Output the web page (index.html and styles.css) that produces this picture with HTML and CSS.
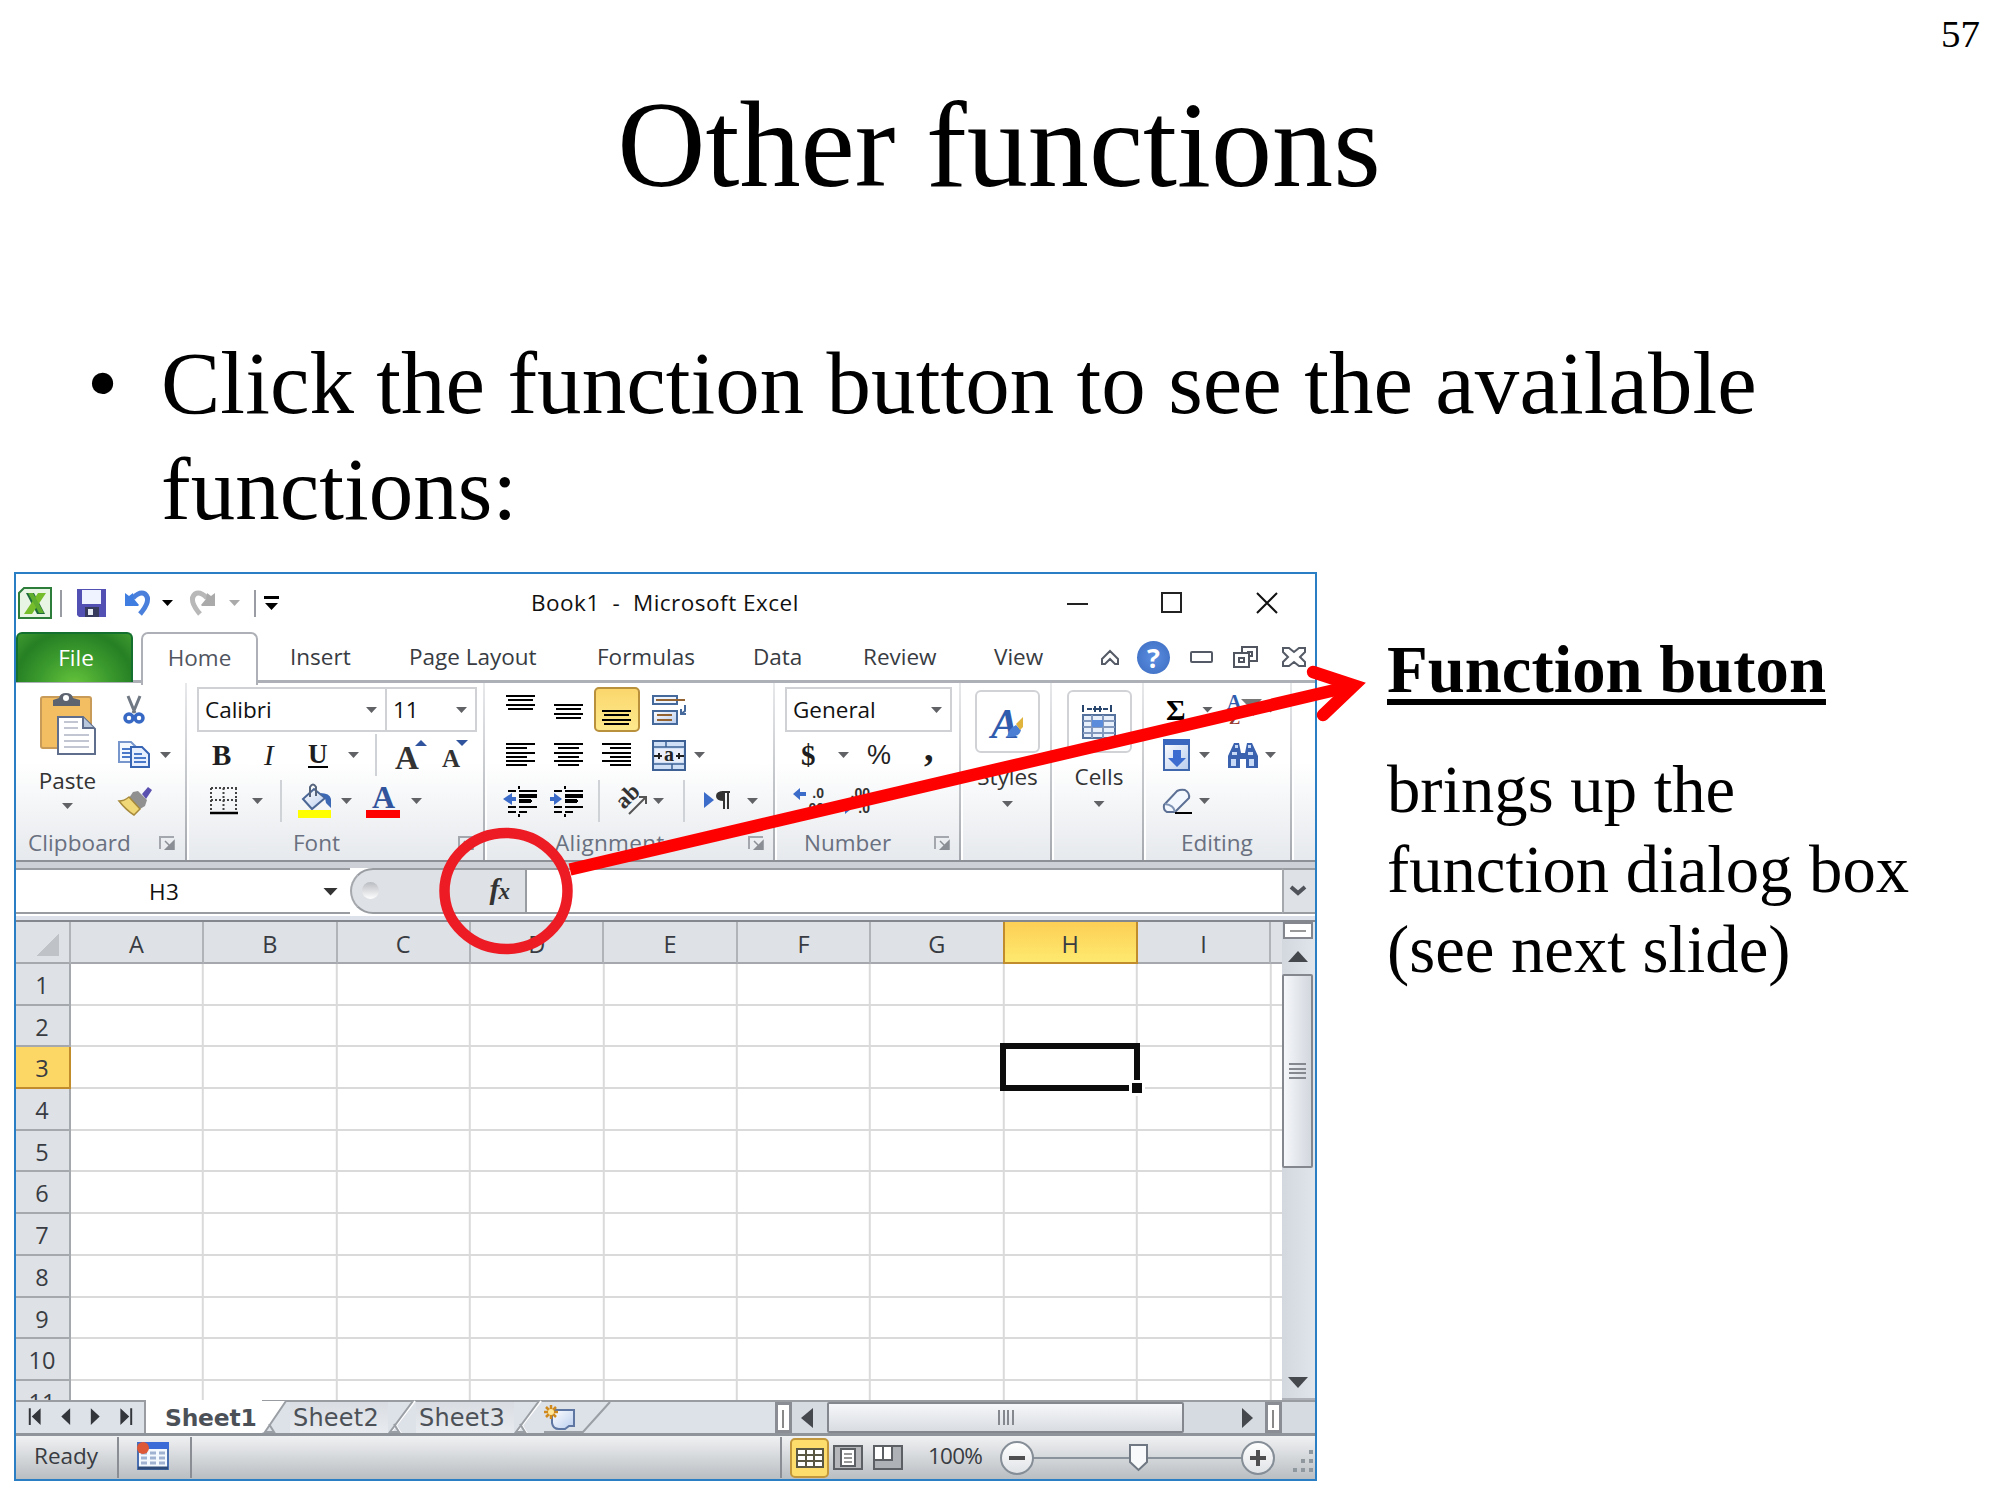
FILE: index.html
```html
<!DOCTYPE html>
<html lang="en">
<head>
<meta charset="utf-8">
<title>Other functions</title>
<link rel="stylesheet" href="styles.css">
</head>
<body>
<svg class="sprite" aria-hidden="true">
  <defs>
    <linearGradient id="paper" x1="0" y1="0" x2="1" y2="1"><stop offset="0" stop-color="#fff"/><stop offset="1" stop-color="#b9cdee"/></linearGradient>
    <linearGradient id="knob" x1="0" y1="0" x2="0" y2="1"><stop offset="0" stop-color="#fff"/><stop offset="1" stop-color="#dfe2e6"/></linearGradient>
    <symbol id="launcher" viewBox="0 0 16 14"><path d="M1 13V1h14" fill="none" stroke="#a4a8ae" stroke-width="2"/><path d="M6 5l4 4M15 5v9H6z" fill="#8b8f95" stroke="#8b8f95" stroke-width="1.5"/></symbol>
  </defs>
</svg>
<main class="slide">
  <div class="page-number">57</div>
  <h1 class="title">Other functions</h1>
  <ul class="bullets"><li>Click the function button to see the available functions:</li></ul>

  <div class="content">
    <section class="window">
      <header class="titlebar">
        <svg width="34" height="32" viewBox="0 0 34 32"><path d="M6 1h27v30H1V6z" fill="#e8f4e4" stroke="#2d7d3a" stroke-width="2"/><path d="M8 6h8l11 21h-8z" fill="#1d6a3c"/><path d="M20 6h8L14 27H6z" fill="#76bd2c"/><path d="M10 6h5l11 20h-5z" fill="#5fae2f"/></svg>
        <i class="tick"></i>
        <svg width="29" height="28" viewBox="0 0 29 28"><path d="M0 0h29v28H2l-2-2z" fill="#5350b4"/><path d="M5 1h19v14H5z" fill="#eef3ff"/><path d="M8 18h14v10H8z" fill="#363a5c"/><path d="M11 20h5v6h-5z" fill="#e8ecf4"/></svg>
        <svg width="26" height="26" viewBox="0 0 26 26"><path d="M8 8Q15 1 20 4q7 6-5 20" fill="none" stroke="#4a80dc" stroke-width="5"/><path d="M0 3l4 3 4-3 1 6 5 6-1 1H0z" fill="#3f7ee0"/></svg>
        <b class="caret caret-black"></b>
        <svg width="26" height="26" viewBox="0 0 26 26"><path d="M18 8Q11 1 6 4q-7 6 5 20" fill="none" stroke="#b8b8b8" stroke-width="5"/><path d="M26 3l-4 3-4-3-1 6-5 6 1 1h13z" fill="#aaa"/></svg>
        <b class="caret caret-light"></b>
        <i class="tick"></i>
        <svg width="15" height="15" viewBox="0 0 15 15"><path d="M0 0h15v3H0zM1 7h13l-6.500 7z"/></svg>
        <span class="caption">Book1 &nbsp;- &nbsp;Microsoft Excel</span>
        <svg width="22" height="22" viewBox="0 0 22 22"><path d="M0 12h21" stroke="#222" stroke-width="2"/></svg>
        <svg width="22" height="22" viewBox="0 0 22 22"><path d="M1 1h19v19H1z" fill="none" stroke="#222" stroke-width="2"/></svg>
        <svg width="22" height="22" viewBox="0 0 22 22"><path d="M1 1l20 20M21 1L1 21" stroke="#111" stroke-width="2"/></svg>
      </header>

      <nav class="tabs">
        <span class="tab-file">File</span>
        <span class="tab-home">Home</span>
        <span class="tab-insert">Insert</span><span>Page Layout</span><span>Formulas</span><span>Data</span><span>Review</span><span>View</span>
        <svg width="20" height="17" viewBox="0 0 20 17"><path d="M10 2l8 8v5h-3l-5-5-5 5H2v-5z" fill="#fff" stroke="#555b66" stroke-width="2"/></svg>
        <span class="help">?</span>
        <svg width="24" height="13" viewBox="0 0 24 13"><rect x="1" y="1" width="21" height="10" rx="1" fill="none" stroke="#555b66" stroke-width="2"/></svg>
        <svg width="26" height="24" viewBox="0 0 26 24"><path d="M9 8V2h15v14h-7M14 7h5v4h-2M1 8h15v14H1zM6 13h5v4H6z" fill="none" stroke="#50555f" stroke-width="2"/></svg>
        <svg width="24" height="20" viewBox="0 0 24 20"><path d="M1 1h6l5 4 5-4h6v4l-5 5 5 5v4h-6l-5-4-5 4H1v-4l5-5-5-5z" fill="#fff" stroke="#555b66" stroke-width="2"/></svg>
      </nav>

      <div class="ribbon">
        <section class="group clipboard">
          <div class="clip-body">
            <div class="paste">
              <svg width="58" height="65" viewBox="0 0 58 65"><rect x="1" y="5" width="50" height="51" rx="2" fill="#f3be62" stroke="#c89b58" stroke-width="2"/><path d="M13 14V8l6-2q1-5 7-5t7 5l7 2v6z" fill="#5d6470"/><circle cx="26" cy="6" r="3" fill="#fff"/><path d="M18 25h25l12 12v25H18z" fill="#fff" stroke="#5e6e8c" stroke-width="2"/><path d="M43 25v11h11" fill="#b9c8dc" stroke="#5e6e8c" stroke-width="2"/><path d="M24 30h14M24 36h14M24 43h25M24 49h25M24 55h25" stroke="#c2c6d2" stroke-width="2"/></svg>
              <span>Paste</span><b class="caret"></b>
            </div>
            <div class="clip-tools">
              <div class="cell cut"><svg width="20" height="30" viewBox="0 0 20 30"><path d="M4 1l7 17M16 1L9 18" stroke="#6f7883" stroke-width="3"/><circle cx="5" cy="23" r="4" fill="none" stroke="#3668c4" stroke-width="3.500"/><circle cx="15" cy="23" r="4" fill="none" stroke="#3668c4" stroke-width="3.500"/></svg></div>
              <div class="cell"><svg width="32" height="28" viewBox="0 0 32 28"><path d="M1 1h12l5 5v15H1z" fill="#f4f8ff" stroke="#7796cc" stroke-width="2"/><path d="M4 8h8M4 12h8M4 16h8" stroke="#4b79c9" stroke-width="2"/><path d="M13 6h11l7 7v13H13z" fill="#e8f0ff" stroke="#3864b4" stroke-width="2"/><path d="M16 13h8M16 17h12M16 21h12" stroke="#4b79c9" stroke-width="2"/></svg><b class="caret"></b></div>
              <div class="cell"><svg width="34" height="30" viewBox="0 0 34 30"><path d="M24 8l6-7 4 3-6 9z" fill="#5a50b0"/><path d="M15 6l5-1 9 9-2 6-5 3L11 12z" fill="#909090"/><path d="M11 11l11 12-6 6Q8 24 1 15q5 0 10-4z" fill="#f0d778" stroke="#a78a3b" stroke-width="1.500"/></svg></div>
            </div>
          </div>
          <footer><span>Clipboard</span><svg class="launch"><use href="#launcher"/></svg></footer>
        </section>

        <section class="group font">
          <div class="row combos"><span class="combo">Calibri<b class="caret"></b></span><span class="combo">11<b class="caret"></b></span></div>
          <div class="row font-style">
            <b class="serif">B</b><i class="serif italic">I</i><b class="serif under">U</b><b class="caret"></b><i class="sep"></i>
            <span class="grow">A<svg width="12" height="6" viewBox="0 0 12 6"><path d="M0 6l6-6 6 6z" fill="#2f539c"/></svg></span>
            <span class="grow shrink">A<svg width="12" height="6" viewBox="0 0 12 6"><path d="M0 0h12L6 6z" fill="#2f539c"/></svg></span>
          </div>
          <div class="row font-color">
            <svg width="28" height="28" viewBox="0 0 28 28"><path d="M1 1h26M1 13h26M1 1v22M13.500 1v22M26 1v22" stroke="#444" stroke-width="2" stroke-dasharray="2 2"/><path d="M0 26h28" stroke="#000" stroke-width="2.500"/></svg><b class="caret"></b><i class="sep"></i>
            <svg width="34" height="34" viewBox="0 0 34 34"><path d="M5 15L16 5l11 9-13 11z" fill="url(#paper)" stroke="#4b6796" stroke-width="2"/><path d="M12 13V3q3-5 6 0v9" fill="none" stroke="#57657c" stroke-width="2"/><path d="M22 9q10 0 11 6v9l-5-5-1-5z" fill="#3c68b4"/><path d="M0 26h33v8H0z" fill="#ff0"/></svg><b class="caret"></b>
            <svg width="34" height="34" viewBox="0 0 34 34"><path d="M0 26h34v8H0z" fill="red"/><text x="6" y="24" class="glyph-a">A</text></svg><b class="caret"></b>
          </div>
          <footer><span>Font</span><svg class="launch"><use href="#launcher"/></svg></footer>
        </section>

        <section class="group alignment">
          <div class="row align-v">
            <svg width="30" height="30" viewBox="0 0 30 30"><path d="M0 1h29M2 5h25M0 10h29M2 14h25" stroke="#000" stroke-width="2"/></svg>
            <svg width="30" height="30" viewBox="0 0 30 30"><path d="M0 10h29M2 14h25M0 19h29M2 23h25" stroke="#000" stroke-width="2"/></svg>
            <span class="pressed"><svg width="30" height="30" viewBox="0 0 30 30"><path d="M0 16h29M2 20h25M0 25h29M2 29h25" stroke="#000" stroke-width="2"/></svg></span>
            <svg width="36" height="32" viewBox="0 0 36 32"><path d="M1 2h24v8H1z" fill="#eef5ff" stroke="#46699b" stroke-width="2"/><path d="M4 6h29" stroke="#946332" stroke-width="2"/><path d="M1 17h24v13H1z" fill="url(#paper)" stroke="#46699b" stroke-width="2"/><path d="M5 21h15M5 26h15" stroke="#946332" stroke-width="2"/><path d="M33 11v6l-4 3M29 15v5h5" fill="none" stroke="#46699b" stroke-width="2"/></svg>
          </div>
          <div class="row align-h">
            <svg width="30" height="24" viewBox="0 0 30 24"><path d="M0 1h29M0 5h21M0 10h29M0 14h21M0 18h29M0 22h21" stroke="#000" stroke-width="2"/></svg>
            <svg width="30" height="24" viewBox="0 0 30 24"><path d="M0 1h29M4 5h21M0 10h29M4 14h21M0 18h29M4 22h21" stroke="#000" stroke-width="2"/></svg>
            <svg width="30" height="24" viewBox="0 0 30 24"><path d="M0 1h29M8 5h21M0 10h29M8 14h21M0 18h29M8 22h21" stroke="#000" stroke-width="2"/></svg>
            <svg width="34" height="31" viewBox="0 0 34 31"><path d="M1 1h32v29H1z" fill="#cfdff5" stroke="#3d6195" stroke-width="2"/><path d="M1 7h32M1 24h32M14 1v6M20 24v6" stroke="#3d6195" stroke-width="1.500"/><path d="M3 9h28v13H3z" fill="#e9eef8"/><path d="M2 16h8M7 13v6M32 16h-8M27 13v6" stroke="#222" stroke-width="2"/><text x="12" y="21" class="glyph-merge">a</text></svg><b class="caret"></b>
          </div>
          <div class="row indent">
            <svg width="34" height="32" viewBox="0 0 34 32"><path d="M5 6h8M16 6h18M16 16h13M5 22h8M16 22h18M5 27h8M16 27h8M16 1v3M16 29v3" stroke="#000" stroke-width="2"/><path d="M16 11h18M16 16h12" stroke="#000" stroke-width="4"/><path d="M0 14l9-6v4h4v4H9v4z" fill="#3c6cca"/></svg>
            <svg width="34" height="32" viewBox="0 0 34 32"><path d="M5 6h8M16 6h18M16 16h13M5 22h8M16 22h18M5 27h8M16 27h8M16 1v3M16 29v3" stroke="#000" stroke-width="2"/><path d="M16 11h18M16 16h12" stroke="#000" stroke-width="4"/><path d="M13 14L5 8v4H1v4h4v4z" fill="#3c6cca"/></svg>
            <i class="sep"></i>
            <svg width="34" height="30" viewBox="0 0 34 30"><text x="0" y="0" transform="translate(8 24) rotate(-45)" class="glyph-ab">ab</text><path d="M13 28L30 11M30 18v-7h-7" stroke="#555" stroke-width="2" fill="none"/></svg><b class="caret"></b>
            <i class="sep"></i>
            <svg width="28" height="20" viewBox="0 0 28 20"><path d="M0 1l10 8-10 8z" fill="#3c6cca"/><path d="M18 1h8M20 1v17M24 1v17" stroke="#333" stroke-width="2"/><path d="M20 0q-8 0-8 5t8 5z" fill="#333"/></svg><b class="caret"></b>
          </div>
          <footer><span>Alignment</span><svg class="launch"><use href="#launcher"/></svg></footer>
        </section>

        <section class="group number">
          <div class="row"><span class="combo">General<b class="caret"></b></span></div>
          <div class="row formats"><b class="serif">$</b><b class="caret"></b><span class="percent">%</span><b class="serif comma">,</b></div>
          <div class="row decimals">
            <svg width="33" height="30" viewBox="0 0 33 30"><path d="M0 8l7-6v4h6v4H7v4z" fill="#3c6cca"/><text x="31" y="12" class="glyph-num">.0</text><text x="31" y="27" class="glyph-num">.00</text></svg>
            <svg width="33" height="30" viewBox="0 0 33 30"><text x="28" y="12" class="glyph-num">.00</text><path d="M9 23l-6-5v3H0v4h3v3z" fill="#3c6cca"/><text x="28" y="27" class="glyph-num">.0</text></svg>
          </div>
          <footer><span>Number</span><svg class="launch"><use href="#launcher"/></svg></footer>
        </section>

        <section class="group big">
          <span class="big-button"><svg width="34" height="36" viewBox="0 0 34 36"><text x="0" y="34" class="glyph-style">A</text><path d="M16 33q2-9 9-12l5 5q-2 8-14 7z" fill="#4a7fd4"/><path d="M25 20l7-7v10l-3 3z" fill="#e0b43c"/></svg></span>
          <span>Styles</span><b class="caret"></b>
        </section>
        <section class="group big">
          <span class="big-button"><svg width="34" height="36" viewBox="0 0 34 36"><path d="M1 1v7M29 1v7M5 5h5M13 2v6M11 5h9M18 2v6M21 5h5" stroke="#29466f" stroke-width="2"/><path d="M1 11h32v23H1z" fill="#e8f0fb" stroke="#54719e" stroke-width="2"/><path d="M1 17h32M1 23h32M1 29h32M10 11v23M21 11v23" stroke="#8299bd" stroke-width="2"/><path d="M10 16h11v7H10z" fill="#5b8cdb"/></svg></span>
          <span>Cells</span><b class="caret"></b>
        </section>

        <section class="group editing">
          <div class="row edit-a">
            <b class="sigma">Σ</b><b class="caret"></b>
            <svg width="36" height="32" viewBox="0 0 36 32"><text x="0" y="15" class="glyph-sort">A</text><text x="2" y="30" class="glyph-z">Z</text><path d="M14 5h21l-8 9v8l-4-3v-5z" fill="#777"/></svg><b class="caret"></b>
          </div>
          <div class="row edit-b">
            <svg width="27" height="32" viewBox="0 0 27 32"><path d="M1 1h25v30H1z" fill="url(#paper)" stroke="#3f67ad" stroke-width="2"/><path d="M0 0h27v6H0z" fill="#3967c0"/><path d="M10 11h8v8h5l-9 9-9-9h5z" fill="#3c6cd0"/></svg><b class="caret"></b>
            <svg width="32" height="28" viewBox="0 0 32 28"><path d="M7 2h5l2 10h4l2-10h5l6 13v12H19v-9h-6v9H1V15z" fill="#3a62ae"/><path d="M8 4h3v3H8zM21 4h3v3h-3zM5 11h5v3H5zM21 11h5v3h-5zM4 18h5v7H4zM22 18h5v7h-5z" fill="#c8daf6"/></svg><b class="caret"></b>
          </div>
          <div class="row edit-b">
            <svg width="29" height="26" viewBox="0 0 29 26"><path d="M1 17L14 3q4-2 8-1 5 3 4 8L12 24H4q-4-2-3-7z" fill="#f3f7fe" stroke="#5b7094" stroke-width="2"/><path d="M2 16q9 1 10 8" fill="none" stroke="#7f94b5" stroke-width="2"/><path d="M12 25h17" stroke="#000" stroke-width="2"/></svg><b class="caret"></b>
          </div>
          <footer><span>Editing</span></footer>
        </section>
      </div>

      <div class="formula-bar">
        <div class="name-box"><span>H3</span><b class="caret caret-wide"></b></div>
        <div class="fx-area"><i class="dot"></i><span class="fx">f<small>x</small></span></div>
        <div class="formula-input"></div>
        <div class="expand"><svg width="18" height="12" viewBox="0 0 18 12"><path d="M2 2l7 6 7-6" fill="none" stroke="#50545a" stroke-width="4"/></svg></div>
      </div>
      <div class="gap-strip"></div>

      <div class="sheet">
        <div class="cells">
          <div class="columns"><span class="corner"></span><span>A</span><span>B</span><span>C</span><span>D</span><span>E</span><span>F</span><span>G</span><span class="active">H</span><span>I</span><span></span></div>
          <div class="line"><span>1</span></div><div class="line"><span>2</span></div><div class="line"><span class="active">3</span></div><div class="line"><span>4</span></div><div class="line"><span>5</span></div><div class="line"><span>6</span></div><div class="line"><span>7</span></div><div class="line"><span>8</span></div><div class="line"><span>9</span></div><div class="line"><span>10</span></div><div class="line"><span>11</span></div>
          <div class="selection"></div>
        </div>
        <div class="vscroll">
          <div class="split"></div>
          <svg width="20" height="11" viewBox="0 0 20 11"><path d="M0 11L10 0l10 11z" fill="#45484d"/></svg>
          <div class="vthumb"><i class="grip"></i></div>
          <svg class="down" width="20" height="11" viewBox="0 0 20 11"><path d="M0 0h20L10 11z" fill="#45484d"/></svg>
        </div>
      </div>

      <div class="sheet-tabs">
        <svg class="nav" width="130" height="31" viewBox="0 0 130 31"><path d="M14 6v17M117 6v17" stroke="#33363b" stroke-width="2"/><path d="M25 6v17l-9-8.500zM55 6v17l-9-8.500zM76 6v17l9-8.500zM106 6v17l9-8.500z" fill="#33363b"/></svg>
        <span class="sheet-tab current">Sheet1</span>
        <svg class="slant" width="28" height="33" viewBox="0 0 28 33"><path d="M0 0h24L4 31H0z" fill="#fff"/><path d="M24 0L3 31h9l-5-8" fill="none" stroke="#9a9fa5" stroke-width="2"/></svg>
        <span class="sheet-tab">Sheet2</span>
        <svg class="slant" width="28" height="33" viewBox="0 0 28 33"><path d="M27 0L3 31h9l-5-8" fill="none" stroke="#fff" stroke-width="2"/><path d="M25 0L2 31h9l-5-8" fill="none" stroke="#9a9fa5" stroke-width="2"/></svg>
        <span class="sheet-tab">Sheet3</span>
        <svg class="slant" width="28" height="33" viewBox="0 0 28 33"><path d="M27 0L3 31h9l-5-8" fill="none" stroke="#fff" stroke-width="2"/><path d="M25 0L2 31h9l-5-8" fill="none" stroke="#9a9fa5" stroke-width="2"/></svg>
        <svg class="new-sheet" width="70" height="31" viewBox="0 0 70 31"><path d="M0 30h39L66 0" fill="none" stroke="#9a9fa5" stroke-width="2"/><path d="M8 8h22v16h-5l-4 3h-6q-6 0-7-6z" fill="url(#paper)" stroke="#5e76a2" stroke-width="2"/><path d="M7 3v14M0 10h14M2 5l10 10M12 5L2 15" stroke="#d08a1c" stroke-width="2.500"/><circle cx="7" cy="10" r="3" fill="#ffe79a"/></svg>
        <div class="hscroll">
          <i class="hsplit"></i>
          <svg width="12" height="20" viewBox="0 0 12 20"><path d="M12 0v20L0 10z" fill="#45484d"/></svg>
          <div class="hthumb"><i class="hgrip"></i></div>
          <svg width="11" height="20" viewBox="0 0 11 20"><path d="M0 0v20l11-10z" fill="#45484d"/></svg>
          <i class="hsplit"></i>
        </div>
      </div>

      <footer class="status">
        <span class="ready">Ready</span><i class="bar"></i>
        <svg class="macro" width="32" height="28" viewBox="0 0 32 28"><path d="M1 1h30v26H1z" fill="#f4f8ff" stroke="#4b70b1" stroke-width="2"/><path d="M1 0h31v7H1z" fill="#3a6bd6"/><path d="M4 11h24M4 16h24M4 21h24" stroke="#9fb2d2" stroke-width="3" stroke-dasharray="6 3"/><path d="M1 26h30" stroke="#2d4a78" stroke-width="3"/><circle cx="6" cy="6" r="6" fill="#dd5836"/></svg>
        <i class="bar"></i><i class="bar"></i>
        <span class="view-on"><svg width="28" height="20" viewBox="0 0 28 20"><path d="M1 1h26v18H1z" fill="#fff" stroke="#5a5742" stroke-width="2"/><path d="M1 7h26M1 13h26M10 1v18M18 1v18" stroke="#5a5742" stroke-width="2"/></svg></span>
        <svg width="30" height="25" viewBox="0 0 30 25"><path d="M1 1h28v23H1z" fill="#b5b7ba" stroke="#5c5f63" stroke-width="2"/><path d="M8 4h14v17H8z" fill="#fff" stroke="#5c5f63" stroke-width="2"/><path d="M11 9h8M11 13h8M11 17h8" stroke="#777" stroke-width="1.500"/></svg>
        <svg width="30" height="25" viewBox="0 0 30 25"><path d="M1 1h28v23H1z" fill="#aeb1b5" stroke="#5c5f63" stroke-width="2"/><path d="M2 2h7v12H2zM11 2h7v12h-7z" fill="#fff"/><path d="M1 15h18V1M10 1v14" stroke="#5c5f63" stroke-width="2" fill="none"/></svg>
        <span class="zoom">100%</span>
        <svg width="275" height="34" viewBox="0 0 275 34"><path d="M33 17h209" stroke="#8a929c" stroke-width="2"/><ellipse cx="17" cy="17" rx="16" ry="16" fill="url(#knob)" stroke="#858d97" stroke-width="2"/><path d="M9 17h16" stroke="#4f4f52" stroke-width="4"/><ellipse cx="258" cy="17" rx="16" ry="16" fill="url(#knob)" stroke="#858d97" stroke-width="2"/><path d="M250 17h16M258 9v16" stroke="#4f4f52" stroke-width="4"/><path d="M130 4h17v17l-8.500 8-8.500-8z" fill="#f8f9fa" stroke="#6f7782" stroke-width="2"/></svg>
        <svg class="resize" width="24" height="24" viewBox="0 0 24 24"><path d="M17 0h4v4h-4zM9 9h4v4H9zM17 9h4v4h-4zM1 18h4v4H1zM9 18h4v4H9zM17 18h4v4h-4z" fill="#8f979f"/></svg>
      </footer>
    </section>

    <aside class="note">
      <p class="note-title">Function buton</p>
      <p class="note-body">brings up the function dialog box (see next slide)</p>
    </aside>
  </div>

  <svg class="annotation" width="2000" height="1500" viewBox="0 0 2000 1500">
    <ellipse cx="506" cy="891" rx="61.500" ry="58" fill="none" stroke="#ed1c24" stroke-width="10.500"/>
    <path d="M570 869.500L1350 686.500" stroke="red" stroke-width="12.500" fill="none"/>
    <path d="M1313 672L1354 685.500 1323 715" stroke="red" stroke-width="12.500" stroke-linecap="round" fill="none"/>
  </svg>
</main>
</body>
</html>
```

FILE: styles.css
```css
*, *::before, *::after { box-sizing: border-box; }
body { margin: 0; background: #fff; color: #000; }
svg { display: block; flex: none; overflow: visible; }
h1, p, ul { margin: 0; padding: 0; font-weight: normal; }
.sprite { position: absolute; width: 0; height: 0; }

/* Slide */
.slide { position: relative; width: 2000px; height: 1500px; overflow: hidden; font-family: "Liberation Serif", serif; }
.page-number { height: 75px; padding: 12px 20px 0 0; text-align: right; font-size: 38.9px; line-height: 44px; }
.title { height: 255px; padding-right: 2px; text-align: center; font-size: 122.2px; line-height: 140px; }
.bullets { height: 242px; padding: 0 200px 0 161px; font-size: 88.9px; line-height: 106.2px; letter-spacing: .08px; list-style: none; }
.bullets li::before { content: "•"; float: left; margin-left: -74px; }
.content { display: flex; gap: 70px; padding-left: 14px; }
.note { padding-top: 58px; width: 560px; font-size: 66.67px; line-height: 80px; }
.note-title { font-weight: bold; text-decoration: underline; text-decoration-thickness: 6px; text-underline-offset: 7px; margin-bottom: 40px; }
.annotation { position: absolute; left: 0; top: 0; }

/* Window */
.window { width: 1303px; height: 909px; border: 2px solid #2a7fc4; background: #fff; color: #383c42; font: 22.5px/30px "Open Sans", "Noto Sans", sans-serif; white-space: nowrap; }
.titlebar { display: grid; grid-template-columns: 42px 17px 48px 37px 27px 40px 25px 10px 267px 536px 94px 95px auto; align-items: center; height: 58px; padding-left: 2px; }
.caption { color: #111; letter-spacing: .5px; }
.tick { width: 2px; height: 27px; background: #999da3; }
.caret { display: block; width: 11px; height: 6px; background: #606266; clip-path: polygon(0 0, 100% 0, 50% 100%); }
.caret-black { background: #000; }
.caret-light { background: #aaa; }
.caret-wide { width: 15px; height: 8px; background: #333; }

.tabs { display: grid; grid-template-columns: 117px 8px 149px 119px 188px 156px 110px 131px 106px 37px 53px 43px 49px auto; align-items: center; height: 51px; border-bottom: 3px solid #adb0b6; line-height: 50px; }
.tab-file { align-self: stretch; padding-left: 3px; border: 2px solid #13702e; border-bottom: 0; border-radius: 6px 6px 0 0; background: radial-gradient(ellipse at 50% 110%, #68c53c 0, #3b9a2d 45%, #268024 75%, #3f9a30 100%); color: #fff; text-align: center; line-height: 47px; }
.tab-home { grid-column: 3; align-self: stretch; width: 117px; margin-bottom: -3px; border: 2px solid #adb0b6; border-bottom: 0; border-radius: 7px 7px 0 0; background: #fff; text-align: center; line-height: 47px; color: #50555f; }
.help { width: 33px; height: 33px; border-radius: 50%; background: radial-gradient(#5b8de0, #3b6cc0); color: #fff; text-align: center; font-weight: bold; font-size: 27px; line-height: 33px; }

/* Ribbon */
.ribbon { display: grid; grid-template-columns: 171px 298px 290px 186px 91px 92px 148px auto; height: 179px; background: linear-gradient(#fff 0, #fff 45%, #e6e9ed 100%); border-bottom: 2px solid #8d9197; }
.group { position: relative; display: grid; grid-template-rows: 45px 46px 46px 36px; padding-top: 4px; border-right: 2px solid; border-image: linear-gradient(#e8e9eb, #a4a8ae) 1; box-shadow: 2px 0 0 #fff; }
.row { display: grid; align-items: center; justify-items: start; }
.group footer { display: flex; align-items: center; color: #697080; padding-top: 2px !important; }
.launch { width: 16px; height: 14px; margin-left: auto; }
.sep { width: 2px; height: 42px; background: #cfd2d6; }
.serif { font-family: "Liberation Serif", serif; font-size: 29px; color: #1e1e20; line-height: 28px; }
.italic { margin-left: 3px; }
.under { border-bottom: 2px solid #000; line-height: 24px; font-size: 27px; }
.combo { display: flex; align-items: center; justify-content: space-between; height: 45px; padding: 1px 8px 0 6px; border: 2px solid #cfd1d4; background: #fff; color: #111; }

.clip-body { grid-row: 1 / 4; display: flex; }
.paste { display: flex; flex-direction: column; align-items: center; width: 77px; margin-left: 13px; padding-top: 5px; line-height: 48px; color: #333; }
.paste .caret { margin-top: -2px; }
.paste svg { margin-left: 3px; }
.clip-tools { display: grid; grid-template-rows: 45px 46px 46px; margin-left: 12px; }
.cell { display: flex; align-items: center; gap: 10px; }
.cut { padding-left: 6px; }
.clipboard footer { padding: 0 10px 0 12px; letter-spacing: .1px; }

.font, .number { padding-left: 10px; }
.combos { grid-template-columns: 190px 90px; justify-items: stretch; justify-content: start; }
.combos .combo + .combo { margin-left: -2px; }
.font-style { grid-template-columns: 49px 47px 40px 27px 20px 47px auto; padding-left: 15px; }
.grow { display: flex; align-items: flex-start; height: 30px; font: bold 33px/36px "Liberation Serif", serif; color: #333; }
.grow svg { margin-left: -4px; }
.shrink { font-size: 25px; line-height: 38px; }
.font-color { grid-template-columns: 42px 28px 18px 43px 25px 45px auto; padding-left: 13px; }
.font footer { padding: 0 9px 0 96px; }
.glyph-a { font: bold 32px "Liberation Serif", serif; fill: #31549c; }

.align-v { grid-template-columns: 48px 40px 58px auto; padding-left: 21px; }
.pressed { display: grid; place-items: center; width: 46px; height: 45px; border: 2px solid #b9903b; border-radius: 5px; background: linear-gradient(#fbd76d, #fde98c); }
.align-h { grid-template-columns: 48px 48px 50px 42px auto; padding-left: 21px; }
.indent { grid-template-columns: 46px 49px 18px 37px 30px 21px 43px auto; padding-left: 18px; }
.alignment footer { padding: 0 9px 0 70px; letter-spacing: .3px; }
.glyph-merge { font: bold 20px "Liberation Serif", serif; fill: #222; }
.glyph-ab { font: bold 23px "Liberation Serif", serif; fill: #333; }

.number .combo { width: 167px; }
.formats { grid-template-columns: 37px 29px 57px auto; padding-left: 16px; }
.percent { font: 27px/28px "Liberation Sans", sans-serif; color: #222; }
.comma { font-size: 38px; line-height: 12px; height: 26px; }
.decimals { grid-template-columns: 49px auto; padding-left: 8px; }
.number footer { padding: 0 9px 0 19px; }
.glyph-num { font: bold 14px "Liberation Sans", sans-serif; fill: #333; text-anchor: end; }

.big { display: flex; flex-direction: column; align-items: center; padding-top: 7px; padding-left: 4px; }
.big-button { display: grid; place-items: center; width: 65px; height: 63px; border: 2px solid #d0d2d6; border-radius: 6px; }
.big-button + span { line-height: 48px; color: #333; }
.glyph-style { font: bold italic 42px "Liberation Serif", serif; fill: #315cae; }

.editing { padding-left: 19px; }
.edit-a { grid-template-columns: 39px 25px 38px auto; }
.edit-b { grid-template-columns: 36px 28px 38px auto; }
.sigma { font: bold 30px/30px "Liberation Serif", serif; color: #000; padding-left: 3px; }
.editing footer { padding-left: 18px; }
.glyph-sort { font: bold 20px "Liberation Serif", serif; fill: #315cae; }
.glyph-z { font: bold 17px "Liberation Serif", serif; fill: #943c32; }

/* Formula bar */
.formula-bar { display: grid; grid-template-columns: 334px 177px 755px auto; height: 52px; border-top: 6px solid #cdd1d7; }
.formula-bar > div { border-top: 2px solid #999da2; border-bottom: 2px solid #999da2; }
.name-box { display: flex; align-items: center; justify-content: space-between; padding: 1px 12px 0 133px; color: #111; letter-spacing: .5px; }
.fx-area { display: flex; align-items: center; justify-content: space-between; padding: 0 15px 2px 10px; border-left: 2px solid #a5a9ae; border-right: 2px solid #999da2; border-radius: 24px 0 0 24px; background: #dee1e6; }
.dot { width: 17px; height: 17px; border-radius: 50%; background: linear-gradient(#b9bcc1, #fff); }
.fx { font: italic bold 30px/34px "Liberation Serif", serif; color: #333; }
.fx small { font-size: 23px; margin-left: -1px; }
.expand { display: grid; place-items: center; padding-right: 4px; border-left: 2px solid #a5a9ae; background: #dee1e6; }
.gap-strip { height: 8px; border-top: 2px solid #fff; border-bottom: 2px solid #84888e; background: #dde1ea; }

/* Grid */
.sheet { display: grid; grid-template-columns: 1266px auto; height: 478px; }
.cells { position: relative; overflow: hidden; background: repeating-linear-gradient(90deg, transparent 0 131.4px, #dadada 131.4px 133.4px) 54.8px 0; }
.columns { display: grid; grid-template-columns: 54.8px repeat(9, 133.4px) auto; height: 42px; }
.columns span { display: grid; place-items: center; padding-top: 3px; border-right: 2px solid #b0b3b8; border-bottom: 2px solid #a5a9ae; background: #dee1e6; line-height: 36px; font-size: 23.5px; }
.columns span:last-child { border-right: 0; }
.columns .corner { background: linear-gradient(135deg, transparent 50%, #bfc2c7 50%) 21px 12px / 22px 22px no-repeat, #dee1e6; }
.columns .active { border-color: #c08c2c; background: linear-gradient(#fdcf55, #fee96f); box-shadow: -2px 0 0 #c08c2c; }
.line { height: 41.7px; border-bottom: 2px solid #dadada; }
.line span { display: block; width: 54.8px; height: 41.7px; padding-right: 1px; border-right: 2px solid #a5a9ae; border-bottom: 2px solid #a5a9ae; background: #dee1e6; text-align: center; line-height: 43px; font-size: 23.5px; }
.line .active { background: #fdd766; border-color: #c08c2c; }
.selection { position: absolute; left: 984px; top: 121px; width: 140px; height: 48px; border: 6px solid #0c0c0c; }
.selection::after { content: ""; position: absolute; right: -11px; bottom: -11px; width: 16px; height: 16px; border: 3px solid #fff; background: #0c0c0c; }
.vscroll { display: flex; flex-direction: column; align-items: center; padding-right: 2px; background: linear-gradient(90deg, #d3d7de, #e0e4eb); border-bottom: 2px solid #adb0b6; }
.split { width: 30px; height: 17px; margin-bottom: 12px; border: 2px solid #84888e; background: linear-gradient(#999, #999) 50% 50% / 16px 2px no-repeat, #fff; }
.vthumb { display: grid; place-items: center; width: 31px; height: 194px; margin-top: 12px; border: 2px solid #84888e; border-radius: 2px; background: linear-gradient(90deg, #f5f7fa, #d3d7de); }
.grip { width: 17px; height: 16px; background: repeating-linear-gradient(#85898f 0 2px, transparent 2px 4.6px); }
.down { margin-top: auto; margin-bottom: 10px; }

/* Sheet tabs */
.sheet-tabs { display: flex; height: 36px; border-top: 2px solid #999da2; border-bottom: 3px solid #8f949a; background: #dde1e8; }
.nav { border-right: 2px solid #999da2; }
.sheet-tab { width: 98px; padding-left: 3px; font: 24px/32px "DejaVu Sans", sans-serif; letter-spacing: .2px; color: #4c5158; background: linear-gradient(#d9dce2, #e8ebef); }
.current { width: 116px; margin-top: -2px; padding: 2px 0 0 19px; font-weight: bold; background: #fff; font-size: 23.4px; letter-spacing: -.2px; }
.slant { margin-top: -1px; }
.new-sheet { margin-left: 2px; }
.hscroll { display: flex; align-items: center; margin-left: auto; width: 540px; padding-right: 33px; background: #d6dae1; }
.hsplit { width: 17px; height: 31px; border: 3px solid #8a8e94; background: linear-gradient(90deg, #888 2px, #fff 2px) 4px 5px / 10px 18px no-repeat, #fff; }
.hscroll svg { margin-left: 9px; }
.hthumb { display: grid; place-items: center; width: 357px; height: 31px; margin: 0 49px 0 14px; border: 2px solid #84888e; border-radius: 2px; background: linear-gradient(#f5f7fa, #d9dce1); }
.hgrip { width: 16px; height: 15px; background: repeating-linear-gradient(90deg, #85898f 0 2px, transparent 2px 4.6px); }
.hscroll .hsplit:last-child { margin-left: auto; }

/* Status bar */
.status { display: grid; grid-template-columns: 83px 20px 53px 590px 10px 43px 40px 56px 71px 292px auto; align-items: center; height: 43px; padding-left: 18px; background: linear-gradient(#f0f1f3, #b9bec2); }
.ready, .zoom { line-height: 28px; padding-bottom: 3px; }
.macro { margin-top: -4px; }
.bar { width: 2px; height: 41px; background: #8a8e94; }
.view-on { display: grid; place-items: center; width: 39px; height: 40px; border: 2px solid #c3973b; border-radius: 5px; background: #fdde6c; }
.zoom { letter-spacing: -.8px; margin-left: -1px; }
.resize { margin-top: 8px; }
```
